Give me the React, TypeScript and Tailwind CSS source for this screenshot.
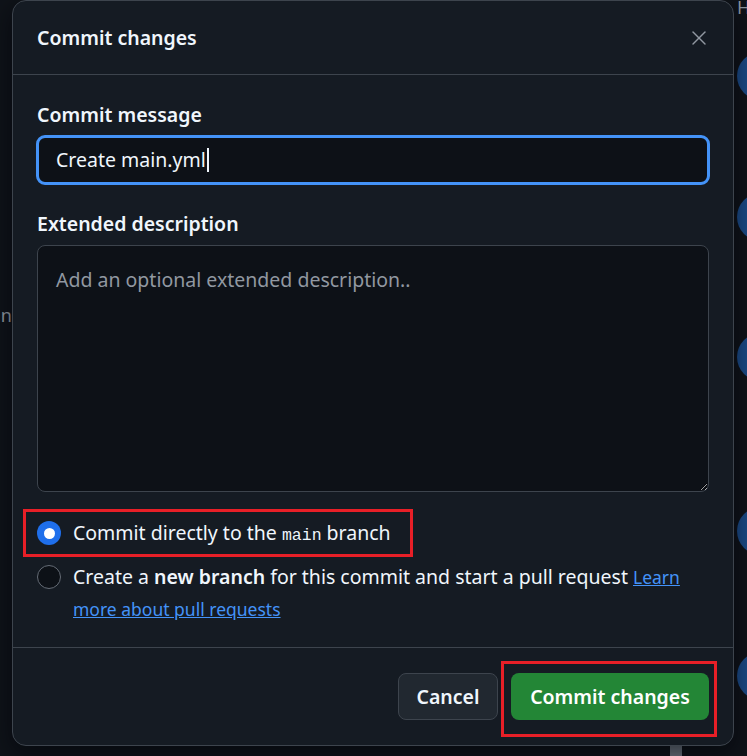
import { X } from 'lucide-react'

const FONT = "font-['Noto_Sans',sans-serif]"

function Radio({ checked }: { checked?: boolean }) {
  return checked ? (
    <span className="w-6 h-6 rounded-full bg-[#1f6feb] flex items-center justify-center shrink-0">
      <span className="w-[11px] h-[11px] rounded-full bg-white" />
    </span>
  ) : (
    <span className="block w-6 h-6 rounded-full bg-[#0d1117] border border-[#656c76] shrink-0" />
  )
}

export default function App() {
  return (
    <div className={`relative w-[747px] h-[756px] overflow-hidden bg-[#0f1319] ${FONT}`}>
      {/* background page peeking out behind the dialog */}
      <span className="absolute left-[737px] top-[-6px] text-[18px] text-[#9198a1]">H</span>
      {[52, 193, 333, 507, 652].map((top) => (
        <span
          key={top}
          className="absolute left-[737px] w-12 h-12 rounded-full bg-[#1b4a86]"
          style={{ top }}
        />
      ))}
      <span className="absolute left-[-4px] top-[302px] text-[18px] text-[#9198a1]">.n</span>
      <span className="absolute left-[670px] top-[746px] w-[12px] h-[10px] bg-[#6e7681]" />

      {/* dialog */}
      <div className="relative ml-[12px] w-[722px] h-[746px] bg-[#151b23] border border-[#3d444d] rounded-[14px] flex flex-col shadow-[0_8px_24px_rgba(1,4,9,0.6)]">
        <div className="h-[74px] px-6 flex items-center justify-between border-b border-[#3d444d]">
          <h2 className="text-[19.5px] font-semibold text-[#f0f6fc]">Commit changes</h2>
          <X className="w-[24px] h-[24px] text-[#9198a1] mr-[-2px]" strokeWidth={1.4} />
        </div>

        <div className="flex-1 px-[23px] pt-[26px] flex flex-col">
          <label className="text-[19.5px] leading-[28px] font-semibold text-[#f0f6fc] ml-px">Commit message</label>
          <div className="mt-[6px] h-[50px] rounded-[9px] border-[3px] border-[#4493f8] bg-[#0d1117] flex items-center px-[17px] text-[19.5px] text-[#f0f6fc]">
            Create main.yml
            <span className="inline-block w-[2px] h-[24px] bg-[#f0f6fc] ml-px" />
          </div>

          <label className="mt-[25px] text-[19.5px] leading-[28px] font-semibold text-[#f0f6fc] ml-px">
            Extended description
          </label>
          <textarea
            className={`mt-[7px] mx-px h-[247px] rounded-[8px] border border-[#3d444d] bg-[#0d1117] px-[18px] py-[22px] text-[19.5px] leading-[24px] text-[#f0f6fc] placeholder:text-[#9198a1] outline-none resize ${FONT}`}
            placeholder="Add an optional extended description.."
            style={{ colorScheme: 'dark' }}
          />

          <div className="relative mt-[28px] ml-px flex items-center gap-3 h-[26px] text-[19.5px] text-[#f0f6fc]">
            <span className="absolute left-[-14px] top-[-11px] w-[390px] h-[48px] border-[3px] border-[#e81f27]" />
            <Radio checked />
            <span>
              Commit directly to the{' '}
              <code className="font-['Liberation_Mono',monospace] text-[16.5px]">main</code> branch
            </span>
          </div>

          <div className="mt-[15px] ml-px flex items-start gap-3 text-[19.5px] leading-[32px] text-[#f0f6fc]">
            <span className="shrink-0 mt-1">
              <Radio />
            </span>
            <p className="flex-1">
              Create a <b className="font-semibold">new branch</b> for this commit and start a pull request{' '}
              <a className="text-[#4493f8] underline text-[17.5px]">Learn more about pull requests</a>
            </p>
          </div>
        </div>

        <div className="h-[98px] border-t border-[#3d444d] px-6 flex items-center justify-end gap-[13px]">
          <button className="h-[47px] w-[100px] rounded-[8px] bg-[#212830] border border-[#3d444d] text-[19.5px] font-semibold text-[#f0f6fc]">
            Cancel
          </button>
          <div className="relative">
            <span className="absolute left-[-10px] top-[-12px] w-[216px] h-[76px] border-[3px] border-[#e81f27]" />
            <button className="h-[47px] w-[198px] rounded-[8px] bg-[#238636] text-[19.5px] font-semibold text-white">
              Commit changes
            </button>
          </div>
        </div>
      </div>
    </div>
  )
}
